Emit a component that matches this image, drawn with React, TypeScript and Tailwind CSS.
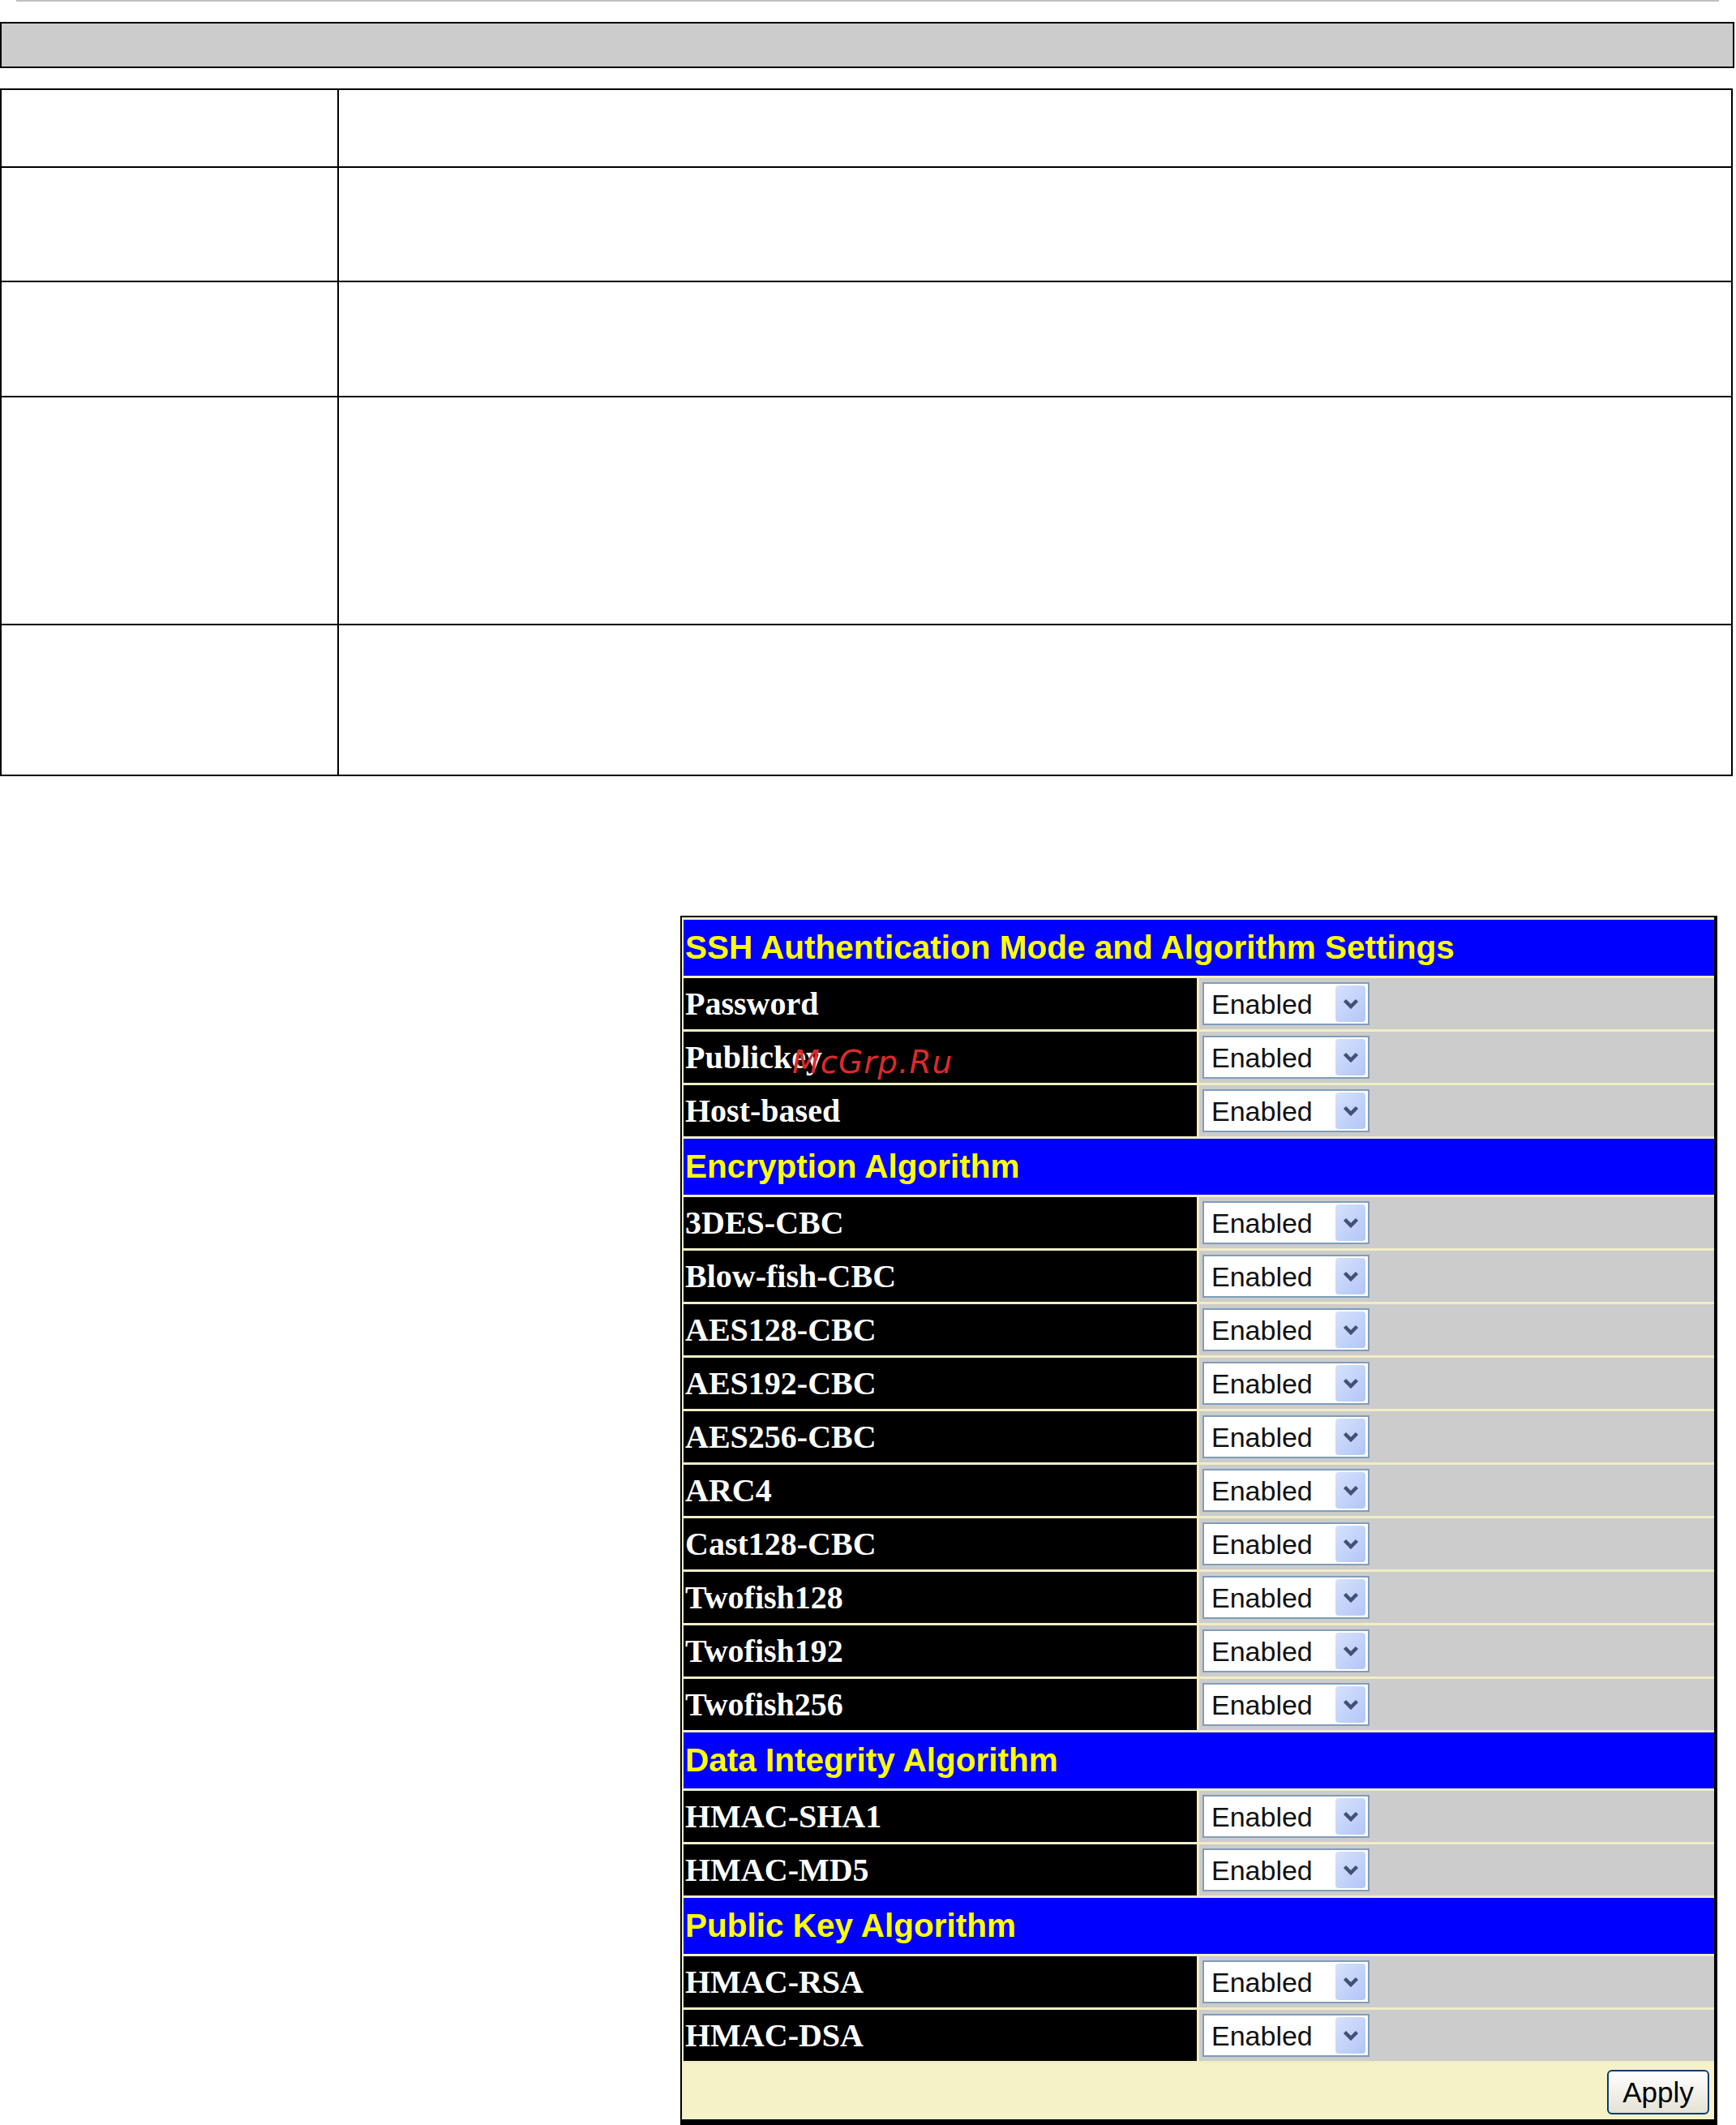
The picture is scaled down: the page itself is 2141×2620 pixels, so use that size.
import React from "react";

interface Section {
  title: string;
  rows: string[];
}

const SECTIONS: Section[] = [
  { title: "SSH Authentication Mode and Algorithm Settings", rows: ["Password", "Publickey", "Host-based"] },
  {
    title: "Encryption Algorithm",
    rows: [
      "3DES-CBC",
      "Blow-fish-CBC",
      "AES128-CBC",
      "AES192-CBC",
      "AES256-CBC",
      "ARC4",
      "Cast128-CBC",
      "Twofish128",
      "Twofish192",
      "Twofish256",
    ],
  },
  { title: "Data Integrity Algorithm", rows: ["HMAC-SHA1", "HMAC-MD5"] },
  { title: "Public Key Algorithm", rows: ["HMAC-RSA", "HMAC-DSA"] },
];

// inner heights of the empty description table rows (border added below)
const PARAM_ROWS = [94, 139, 140, 279, 184];

const Dropdown = () => (
  <div className="flex items-center justify-between w-[206px] h-[53px] border-2 border-[#7f9db9] bg-white pl-[9px] pr-[3px]">
    <span className="font-['Liberation_Sans',Arial,sans-serif] text-[34px] leading-none text-[#111]">Enabled</span>
    <div className="flex items-center justify-center w-[37px] h-[45px] rounded-[4px] bg-linear-to-br from-[#d6e1fd] to-[#b2c6f6]">
      <svg width="20" height="13" viewBox="0 0 20 13">
        <polyline points="2.5,2.5 10,10 17.5,2.5" fill="none" stroke="#3f5275" strokeWidth="4.5" />
      </svg>
    </div>
  </div>
);

const SettingRow = ({ label }: { label: string }) => (
  <div className="flex gap-[3px] h-[63px]">
    <div className="relative flex items-center w-[633px] bg-black pl-[2px]">
      <span className="font-['Liberation_Serif','Times_New_Roman',serif] font-bold text-[40px] leading-none text-white">
        {label}
      </span>
      {label === "Publickey" && (
        <span className="absolute left-[134px] top-[18px] font-['DejaVu_Sans',sans-serif] italic text-[39px] leading-none tracking-[1px] text-[#dc2a2a]">
          McGrp.Ru
        </span>
      )}
    </div>
    <div className="flex items-center flex-1 bg-[#cccccc] pl-[4px]">
      <Dropdown />
    </div>
  </div>
);

const App = () => {
  return (
    <div className="w-[2141px] min-h-[2620px] bg-white">
      <div className="ml-[20px] w-[2100px] h-[2px] bg-[#c0c0c0]" />
      <div className="mt-[25px] w-[2139px] h-[57px] border-2 border-black bg-[#cccccc]" />

      <div className="mt-[25px] w-[2137px] border-2 border-black">
        {PARAM_ROWS.map((h, i) => (
          <div
            key={i}
            className={`flex ${i > 0 ? "border-t-2 border-black" : ""}`}
            style={{ height: i > 0 ? h + 2 : h }}
          >
            <div className="w-[416px] border-r-2 border-black" />
            <div className="flex-1" />
          </div>
        ))}
      </div>

      <div className="ml-[839px] mt-[172px] w-[1279px] border-t-2 border-l-2 border-r-4 border-b-[7px] border-black bg-[#f1edc6] pt-[3px] pl-[2px]">
        <div className="flex flex-col gap-[3px]">
          {SECTIONS.map((section) => (
            <React.Fragment key={section.title}>
              <div className="flex items-center h-[69px] bg-[#0000ff] pl-[2px]">
                <span className="font-['Liberation_Sans',Arial,sans-serif] font-bold text-[40.5px] leading-none text-[#ffff00]">
                  {section.title}
                </span>
              </div>
              {section.rows.map((row) => (
                <SettingRow key={row} label={row} />
              ))}
            </React.Fragment>
          ))}
          <div className="flex justify-end items-start h-[69px] bg-[#f6f2c8] pt-[8px] pr-[6px]">
            <button className="w-[126px] h-[55px] border-2 border-[#003c74] rounded-[6px] bg-linear-to-b from-white to-[#e4e1d4] font-['Liberation_Sans',Arial,sans-serif] text-[35px] leading-none text-black">
              Apply
            </button>
          </div>
        </div>
      </div>
    </div>
  );
};

export default App;
